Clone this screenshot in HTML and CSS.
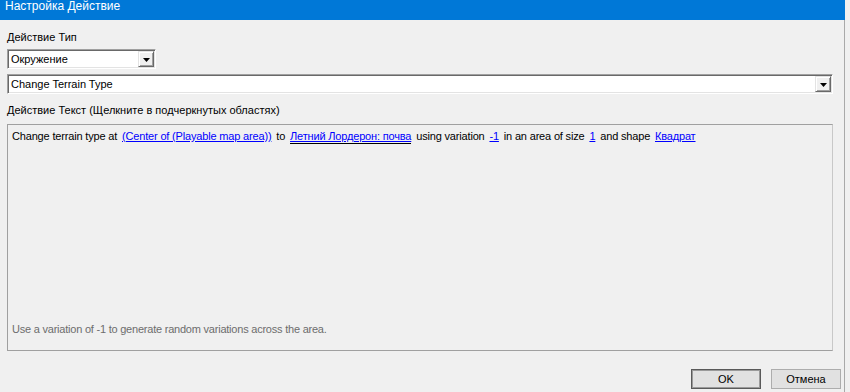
FILE: index.html
```html
<!DOCTYPE html>
<html lang="ru">
<head>
  <meta charset="UTF-8" />
  <title>Настройка Действие</title>
  <link rel="stylesheet" href="styles.css">
</head>
<body>

<div class="dialog">
  <div class="titlebar">Настройка Действие</div>

  <div class="content">
    <div class="label first">Действие Тип</div>

    <div class="combo small">
      <span class="combo-text">Окружение</span>
      <span class="drop"><svg width="7" height="4" viewBox="0 0 7 4"><polygon points="0,0 7,0 3.5,4" fill="#000"/></svg></span>
    </div>

    <div class="combo wide">
      <span class="combo-text">Change Terrain Type</span>
      <span class="drop"><svg width="7" height="4" viewBox="0 0 7 4"><polygon points="0,0 7,0 3.5,4" fill="#000"/></svg></span>
    </div>

    <div class="label second">Действие Текст (Щелкните в подчеркнутых областях)</div>

    <div class="textbox">
      <p class="sentence">
        Change terrain type at <a class="param">(Center of (Playable map area))</a> to
        <a class="param selected">Летний Лордерон: почва</a> using variation
        <a class="param">-1</a> in an area of size <a class="param">1</a> and shape
        <a class="param">Квадрат</a>
      </p>
      <p class="note">Use a variation of -1 to generate random variations across the area.</p>
    </div>

    <div class="buttons">
      <button class="btn default">OK</button>
      <button class="btn">Отмена</button>
    </div>
  </div>
</div>

</body>
</html>
```

FILE: styles.css
```css
body {
  margin: 0;
  width: 850px;
  height: 392px;
  overflow: hidden;
  background: #f0f0f0;
  font-family: 'Liberation Sans', Arial, sans-serif;
  font-size: 11px;
  color: #000;
}
.dialog {
  width: 845px;
  height: 392px;
  display: flex;
  flex-direction: column;
}
.titlebar {
  box-sizing: border-box;
  height: 20px;
  background: #0078d7;
  color: #fff;
  font-size: 12px;
  line-height: 12px;
  padding-left: 5px;
  white-space: nowrap;
}
.content {
  flex: 1;
  display: flex;
  flex-direction: column;
  padding-left: 7px;
  border-right: 1px solid #a9a9a9;
}
.label {
  line-height: 13px;
  white-space: nowrap;
}
.label.first {
  margin-top: 11px;
}
.label.second {
  margin-top: 10px;
}
.combo {
  box-sizing: border-box;
  height: 20px;
  background: #fff;
  border: 1px solid;
  border-color: #a0a0a0 #fff #fff #a0a0a0;
  box-shadow: inset 1px 1px #696969, inset -1px -1px #e3e3e3;
  display: flex;
  align-items: stretch;
  padding: 1px;
}
.combo.small {
  width: 149px;
  margin-top: 5px;
}
.combo.wide {
  width: 826px;
  margin-top: 5px;
}
.combo-text {
  flex: 1;
  padding-left: 2px;
  line-height: 16px;
}
.drop {
  box-sizing: border-box;
  width: 16px;
  background: #f0f0f0;
  border: 1px solid;
  border-color: #e3e3e3 #696969 #696969 #e3e3e3;
  box-shadow: inset 1px 1px #fff, inset -1px -1px #a0a0a0;
  display: flex;
  align-items: center;
  justify-content: center;
  padding-top: 1px;
}
.drop svg {
  display: block;
}
.textbox {
  box-sizing: border-box;
  width: 826px;
  height: 227px;
  margin-top: 7px;
  border: 1px solid #a0a0a0;
  border-right-color: #c8c8c8;
  padding: 4px 4px 0;
  display: flex;
  flex-direction: column;
  justify-content: space-between;
}
.sentence {
  margin: 0;
  line-height: 15px;
  white-space: nowrap;
  letter-spacing: -0.17px;
}
.param {
  color: #0000ff;
  text-decoration: underline;
  margin: 0 2px;
}
.param.selected {
  border-bottom: 1px solid #000;
  padding-bottom: 1px;
}
.note {
  margin: 0 0 14px;
  color: #6d6d6d;
  line-height: 13px;
  letter-spacing: -0.22px;
}
.buttons {
  margin-top: 18px;
  display: flex;
  justify-content: flex-end;
  gap: 10px;
  padding-right: 3px;
}
.btn {
  box-sizing: border-box;
  width: 70px;
  height: 20px;
  background: #e1e1e1;
  border: 1px solid #adadad;
  font-family: 'Liberation Sans', Arial, sans-serif;
  font-size: 11px;
  color: #000;
  padding: 0;
}
.btn.default {
  border-color: #5a5a5a;
  box-shadow: inset 0 0 0 1px #9a9a9a;
}
```
